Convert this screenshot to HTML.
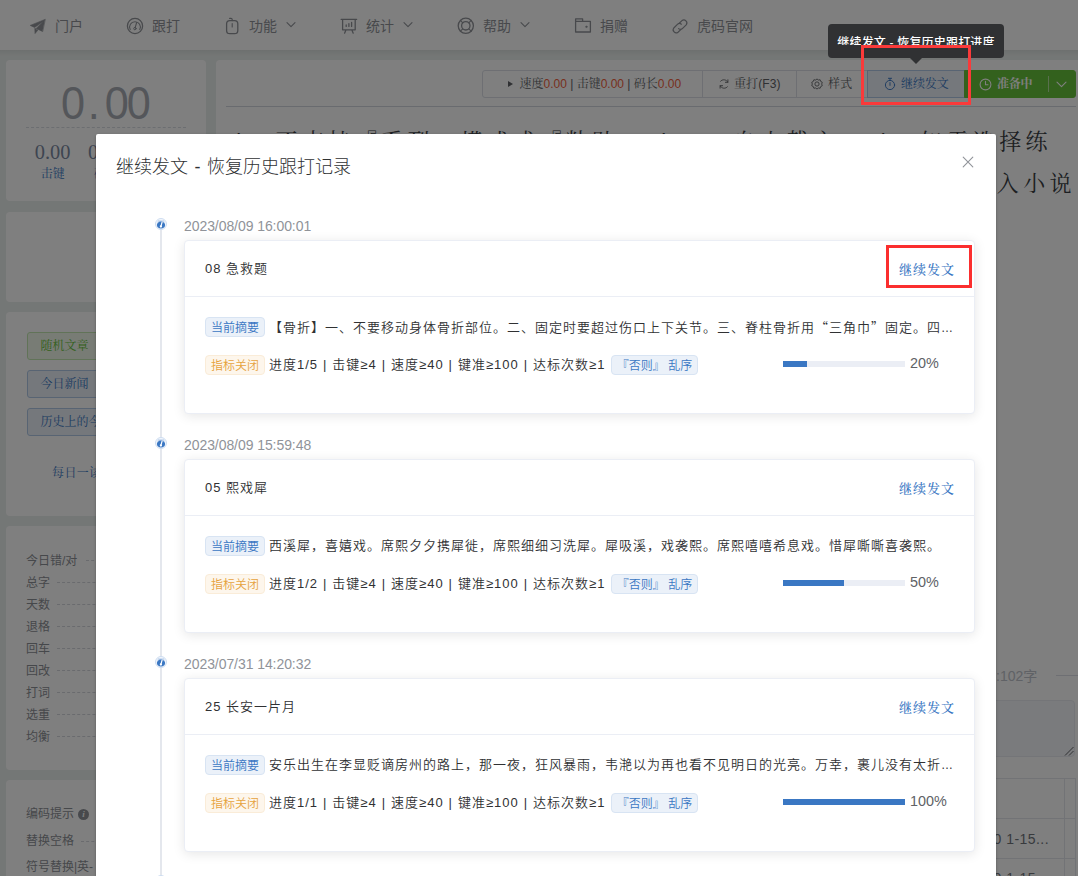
<!DOCTYPE html>
<html lang="zh-CN">
<head>
<meta charset="utf-8">
<title>虎码跟打器 - 继续发文</title>
<style>
*{box-sizing:border-box}
html,body{margin:0;padding:0}
body{width:1078px;height:876px;overflow:hidden;position:relative;background:#e9eeec;font-family:"Liberation Sans","Noto Sans CJK SC",sans-serif;color:#303133;font-size:14px}
.abs{position:absolute}
.kai{font-family:"Liberation Sans","Noto Serif CJK SC",serif}
/* header */
#hd{left:0;top:0;width:1078px;height:50px;background:#fff}
.mi{position:absolute;top:0;height:50px;line-height:52px;font-size:14px;color:#909399;white-space:nowrap}
.mi svg{position:absolute;top:17px;width:18px;height:18px}
.mi .arr{position:absolute;top:21px;width:10px;height:10px}
/* cards */
.card{position:absolute;background:#fff;border-radius:4px}
.lbl{position:absolute;left:20px;font-size:12px;line-height:16px;color:#8d9096;white-space:nowrap}
.dash{position:absolute;height:0;border-top:1px dashed #d4d7dd}
.pbtn{position:absolute;left:21px;width:120px;height:28px;border-radius:3px;font-size:12px;line-height:27.5px;padding-left:12.5px;white-space:nowrap;border:1px solid}
#lcd span{display:inline-block;width:23.05px;text-align:center}
.st{position:absolute;top:80px;width:53.3px;text-align:center}
.st b{display:block;font:normal 20.4px/24px "Liberation Serif",serif;color:#7d8ba3}
.st i{display:block;font-style:normal;font-size:12px;line-height:14px;color:#3a77c3;margin-top:3px;font-family:"Liberation Serif","Noto Serif CJK SC",serif}
/* toolbar */
.tb{position:absolute;top:10px;height:28px;border:1px solid #dcdfe6;background:#fff;font-size:12px;line-height:26px;color:#606266;white-space:nowrap;text-align:center}
.tb em{font-style:normal;font-size:12px;color:#f0603c;font-family:"Liberation Sans",sans-serif}
.art{font-size:22px;line-height:32px;letter-spacing:4.4px;color:#3b3e44;white-space:nowrap}
/* overlay */
#ov{left:0;top:0;width:1078px;height:876px;background:rgba(0,0,0,.5)}
/* dialog */
#dlg{left:96px;top:134px;width:900px;height:800px;background:#fff;border-radius:2px;box-shadow:0 1px 3px rgba(0,0,0,.3)}
.ts{position:absolute;left:88px;font-size:14px;line-height:16px;color:#909399;white-space:nowrap;letter-spacing:-.07px}
.node{position:absolute;left:59px;width:12px;height:12px}
.tc{position:absolute;left:88px;width:791px;height:174px;background:#fff;border:1px solid #ebeef5;border-radius:4px;box-shadow:0 2px 12px 0 rgba(0,0,0,.1)}
.tc .h{position:absolute;left:0;top:0;width:789px;height:56px;border-bottom:1px solid #ebeef5}
.tc .h .t{font-weight:350;position:absolute;left:20px;top:18px;font-size:13px;letter-spacing:1px;line-height:20px;color:#303133;white-space:nowrap}
.tc .h .a{position:absolute;right:19px;top:20px;font-weight:500;font-size:13px;line-height:18px;color:#3a77c3;letter-spacing:1px;white-space:nowrap}
.tag{font-weight:350;position:absolute;height:20px;line-height:20.5px;font-size:12px;padding:0 4px;border:1px solid;border-radius:4px;white-space:nowrap;text-align:center}
.tag.b{background:#ebf1f9;border-color:#d8e4f3;color:#3a77c3}
.tag.o{background:#fdf6ec;border-color:#faecd8;color:#e6a23c}
.ln{position:absolute;font-weight:350;font-size:13px;letter-spacing:1px;line-height:20px;color:#303133;white-space:nowrap;overflow:hidden}
.ln .cq{font-family:"Noto Sans CJK SC",sans-serif}.ln .el{font-size:12px;letter-spacing:0}
.l2{letter-spacing:1px;word-spacing:.35px}
.pg{position:absolute;left:598px;width:122px;height:6px;background:#ebeef5}
.pg i{display:block;height:6px;background:#3a77c3}
.pt{position:absolute;left:725px;font-size:14.4px;line-height:18px;color:#606266}
</style>
</head>
<body>
<!-- ============ header ============ -->
<div id="hd" class="abs">
  <svg class="abs" style="left:0;top:0" width="1078" height="50" viewBox="0 0 1078 50" fill="none" stroke="#909399" stroke-width="1.3" stroke-linecap="round" stroke-linejoin="round">
    <!-- position (paper plane) -->
    <path d="M45 19.4 L30.2 25.4 L34.6 27.5 L43.4 21.2 L36.2 28.4 L42.4 31.4 Z M34.8 28.6 L35 33.6 L37.8 30.2 Z" fill="#909399" stroke-width=".6"/>
    <!-- odometer -->
    <circle cx="135" cy="26" r="7.6"/>
    <path d="M130.2 29.6 A5.4 5.4 0 1 1 139.8 29.6" stroke-width="1.1"/>
    <path d="M136.6 22.6 L135.2 27.6" stroke-width="1.1"/>
    <circle cx="134.9" cy="28.6" r="1.2" stroke-width="1"/>
    <!-- mouse -->
    <rect x="226.6" y="20.6" width="11.2" height="13" rx="3.2"/>
    <path d="M232.2 23.6 V27 M232.2 20.6 V19.6 Q232.2 18.4 231 18.4 H229.6" stroke-width="1.1"/>
    <path d="M287 22.6 L291 26.6 L295 22.6" stroke-width="1.1"/>
    <!-- data board -->
    <path d="M341.2 19.4 H356.6 M342.6 19.4 V29.8 H355.2 V19.4 M346 29.8 L344.6 33.2 M351.8 29.8 L353.2 33.2 M346.2 26.4 V25 M348.9 26.4 V23.6 M351.6 26.4 V22.4"/>
    <path d="M404 22.6 L408 26.6 L412 22.6" stroke-width="1.1"/>
    <!-- help -->
    <circle cx="465.8" cy="25.8" r="7.6"/>
    <circle cx="465.8" cy="25.8" r="4.2"/>
    <path d="M460.4 20.4 L462.8 22.8 M471.2 20.4 L468.8 22.8 M460.4 31.2 L462.8 28.8 M471.2 31.2 L468.8 28.8" stroke-width="1.1"/>
    <path d="M521 22.6 L525 26.6 L529 22.6" stroke-width="1.1"/>
    <!-- wallet/folder -->
    <path d="M575.6 21.4 V18.8 H582.6 V21.4 M575.6 21.4 H590.4 V32 H575.6 Z"/>
    <circle cx="586.4" cy="26.8" r=".8" fill="#909399" stroke-width=".6"/>
    <!-- link -->
    <path d="M679.2 23.2 L682 20.6 A3 3 0 0 1 686.2 24.8 L682.6 28.4 A3 3 0 0 1 678.6 28.6 M680.8 29.6 L678 32.2 A3 3 0 0 1 673.8 28 L677.4 24.4 A3 3 0 0 1 681.4 24.2" stroke-width="1.2"/>
  </svg>
  <div class="mi" style="left:6px;width:97px"><span style="position:absolute;left:49px">门户</span></div>
  <div class="mi" style="left:103px;width:97px"><span style="position:absolute;left:49px">跟打</span></div>
  <div class="mi" style="left:200px;width:117px"><span style="position:absolute;left:49px">功能</span></div>
  <div class="mi" style="left:317px;width:117px"><span style="position:absolute;left:49px">统计</span></div>
  <div class="mi" style="left:434px;width:117px"><span style="position:absolute;left:49px">帮助</span></div>
  <div class="mi" style="left:551px;width:97px"><span style="position:absolute;left:49px">捐赠</span></div>
  <div class="mi" style="left:648px;width:125px"><span style="position:absolute;left:49px">虎码官网</span></div>
</div>
<div class="abs" style="left:0;top:50px;width:1078px;height:6px;background:linear-gradient(rgba(0,0,0,.06),rgba(0,0,0,0))"></div>

<!-- ============ left column ============ -->
<div class="card" id="c1" style="left:6px;top:60px;width:200px;height:141px">
  <div class="abs" id="lcd" style="left:54.5px;top:17px;width:110px;height:54px;font-size:45.5px;line-height:54px;transform:scaleX(.95);transform-origin:0 0;color:#a9adb5;white-space:nowrap"><span>0</span><span>.</span><span>0</span><span>0</span></div>
  <div class="dash" style="left:20px;top:67px;width:160px;border-top-color:#d9dce3"></div>
  <div class="st" style="left:20px"><b>0.00</b><i>击键</i></div>
  <div class="st" style="left:73.3px"><b>0.00</b><i>码长</i></div>
  <div class="st" style="left:126.6px"><b>0.00</b><i>速度</i></div>
</div>
<div class="card" id="c2" style="left:6px;top:212px;width:200px;height:90px"></div>
<div class="card" id="c3" style="left:6px;top:312px;width:200px;height:204px">
  <div class="pbtn kai" style="top:20px;background:#f0f9eb;border-color:#c2e7b0;color:#67c23a">随机文章</div>
  <div class="pbtn kai" style="top:58px;background:#ebf1f9;border-color:#b0c9e7;color:#3a77c3">今日新闻</div>
  <div class="pbtn kai" style="top:96px;background:#ebf1f9;border-color:#b0c9e7;color:#3a77c3">历史上的今天</div>
  <div class="abs kai" style="left:46px;top:153px;font-size:12px;line-height:16px;color:#3a77c3;white-space:nowrap;letter-spacing:.4px">每日一读</div>
</div>
<div class="card" id="c4" style="left:6px;top:526px;width:200px;height:244px">
  <div class="lbl" style="top:27px">今日错/对</div><div class="dash" style="left:80px;top:34px;width:70px"></div>
  <div class="lbl" style="top:49px">总字</div><div class="dash" style="left:51px;top:56px;width:99px"></div>
  <div class="lbl" style="top:71px">天数</div><div class="dash" style="left:51px;top:78px;width:99px"></div>
  <div class="lbl" style="top:93px">退格</div><div class="dash" style="left:51px;top:100px;width:99px"></div>
  <div class="lbl" style="top:115px">回车</div><div class="dash" style="left:51px;top:122px;width:99px"></div>
  <div class="lbl" style="top:137px">回改</div><div class="dash" style="left:51px;top:144px;width:99px"></div>
  <div class="lbl" style="top:159px">打词</div><div class="dash" style="left:51px;top:166px;width:99px"></div>
  <div class="lbl" style="top:181px">选重</div><div class="dash" style="left:51px;top:188px;width:99px"></div>
  <div class="lbl" style="top:203px">均衡</div><div class="dash" style="left:51px;top:210px;width:99px"></div>
</div>
<div class="card" id="c5" style="left:6px;top:780px;width:200px;height:200px">
  <div class="lbl" style="top:26px">编码提示</div>
  <div class="abs" style="left:72px;top:28.5px;width:11px;height:11px;border-radius:50%;background:#909399;color:#fff;font:italic bold 9px/11px 'Liberation Serif',serif;text-align:center">i</div>
  <div class="lbl" style="top:52.5px">替换空格</div><div class="dash" style="left:75px;top:61px;width:70px"></div>
  <div class="lbl" style="top:78.5px">符号替换|英-<span style="margin-left:4px">中</span></div>
</div>

<!-- ============ main card ============ -->
<div class="card" id="main" style="left:216px;top:60px;width:880px;height:900px">
  <!-- toolbar : coordinates relative to card (page x-216, page y-60) -->
  <div class="tb kai" style="left:266px;width:220.5px;border-radius:3px 0 0 3px;text-align:left;padding-left:36.5px;letter-spacing:0"><span class="abs" style="left:25px;top:9.5px;width:0;height:0;border-left:5px solid #606266;border-top:3.5px solid transparent;border-bottom:3.5px solid transparent"></span>速度<em>0.00</em> | 击键<em>0.00</em> | 码长<em>0.00</em></div>
  <div class="tb kai" style="left:485.5px;width:95px;text-align:left;padding-left:31.5px;letter-spacing:.1px"><svg class="abs" style="left:15px;top:7px" width="12" height="12" viewBox="0 0 12 12" fill="none" stroke="#606266" stroke-width=".9" stroke-linecap="round" stroke-linejoin="round"><path d="M9.8 4.2 A4.2 4.2 0 0 0 2.6 3.2 M2.2 7.8 A4.2 4.2 0 0 0 9.4 8.8 M9.9 1.8 V4.3 H7.4 M2.1 10.2 V7.7 H4.6"/></svg>重打(F3)</div>
  <div class="tb kai" style="left:579.5px;width:73.5px;text-align:left;padding-left:31.5px;letter-spacing:.3px"><svg class="abs" style="left:14px;top:7px" width="12" height="12" viewBox="0 0 13 13" fill="none" stroke="#606266" stroke-width=".95" stroke-linejoin="round"><path d="M6.5 1 L8 2.2 L9.9 1.9 L10.5 3.7 L12.2 4.6 L11.6 6.5 L12.2 8.4 L10.5 9.3 L9.9 11.1 L8 10.8 L6.5 12 L5 10.8 L3.1 11.1 L2.5 9.3 L.8 8.4 L1.4 6.5 L.8 4.6 L2.5 3.7 L3.1 1.9 L5 2.2 Z"/><circle cx="6.5" cy="6.5" r="2.3"/></svg>样式</div>
  <div class="tb kai" style="left:651px;width:98px;text-align:left;padding-left:33px;background:#ebf1f9;border-color:#b0c9e7;color:#3a77c3;letter-spacing:-.1px"><svg class="abs" style="left:16px;top:6px" width="12" height="14" viewBox="0 0 12 14" fill="none" stroke="#3a77c3" stroke-width=".95" stroke-linecap="round"><circle cx="6" cy="8" r="4.6"/><path d="M6 5.6 V8.4 M4.4 1.3 H7.6 M6 1.5 V3.2"/></svg>继续发文</div>
  <div class="tb kai" style="left:748px;width:112px;border-radius:0 3px 3px 0;background:#67c23a;border-color:#67c23a;color:#fff;text-align:left;padding-left:32px;font-weight:bold;letter-spacing:-.2px"><svg class="abs" style="left:14px;top:6.5px" width="13" height="13" viewBox="0 0 13 13" fill="none" stroke="#fff" stroke-width="1.1" stroke-linecap="round"><circle cx="6.5" cy="6.5" r="5.4"/><path d="M6.5 3.4 V6.8 H9"/></svg>准备中<span class="abs" style="left:82.5px;top:5px;width:1px;height:16px;background:rgba(255,255,255,.5)"></span><svg class="abs" style="left:91px;top:9.5px" width="11" height="7" viewBox="0 0 11 7" fill="none" stroke="#fff" stroke-width="1.1" stroke-linecap="round" stroke-linejoin="round"><path d="M1 1.2 L5.5 5.6 L10 1.2"/></svg></div>
  <div class="abs" style="left:10px;top:46px;width:850px;height:1px;background:#d3d6de"></div>
  <!-- article -->
  <div class="abs kai art" style="left:12px;right:44px;top:66px;display:flex;justify-content:flex-end;overflow:hidden"><span>1)、不支持『系列』模式或『粘贴Ctrl+V』自由载文。2)、如需选择练</span></div>
  <div class="abs kai art" style="right:20px;top:108px">习，请先在『功能』菜单内发文，支持单字、词语、文章、自由载入小说</div>
  <!-- lower area -->
  <div class="abs" style="left:766px;top:606px;font-size:14px;line-height:20px;color:#c0c4cc;white-space:nowrap">共:102字</div>
  <div class="abs" style="left:840px;top:615px;width:40px;height:1px;background:#dcdfe6"></div>
  <div class="abs" style="left:10px;top:640px;width:849px;height:57px;background:#f5f7fa;border:1px solid #e8ebf0;border-radius:4px"><svg class="abs" style="right:0;bottom:0" width="10" height="10" viewBox="0 0 10 10" stroke="#606266" stroke-width="1"><path d="M9.5 1 L1 9.5 M9.5 5 L5 9.5"/></svg></div>
  <div class="abs" id="tbl" style="left:10px;top:718px;width:850px;height:200px;border:1px solid #e4e7ed;border-bottom:0">
    <div class="abs" style="left:0;top:39px;width:848px;height:1px;background:#e4e7ed"></div>
    <div class="abs" style="left:0;top:79px;width:848px;height:1px;background:#e4e7ed"></div>
    <div class="abs" style="left:0;top:118px;width:848px;height:1px;background:#e4e7ed"></div>
    <div class="abs" style="left:837px;top:0;width:1px;height:200px;background:#e4e7ed"></div>
    <div class="abs" style="left:690px;top:50px;width:132px;font-size:14px;line-height:20px;color:#70747b;white-space:nowrap;overflow:hidden;text-align:right;letter-spacing:.45px">2023-08-10 1-15...</div>
    <div class="abs" style="left:690px;top:89px;width:132px;font-size:14px;line-height:20px;color:#70747b;white-space:nowrap;overflow:hidden;text-align:right;letter-spacing:.45px">2023-08-10 1-15...</div>
  </div>
</div>

<!-- ============ overlay ============ -->
<div id="ov" class="abs"></div>

<!-- ============ dialog ============ -->
<div id="dlg" class="abs">
  <div class="abs" style="left:20px;top:21px;font-size:18px;font-weight:300;line-height:24px;color:#303133;white-space:nowrap;word-spacing:1.5px">继续发文 - 恢复历史跟打记录</div>
  <svg class="abs" style="left:866px;top:22px" width="12" height="12" viewBox="0 0 12 12" stroke="#909399" stroke-width="1.1" stroke-linecap="round"><path d="M1.2 1.2 L10.8 10.8 M10.8 1.2 L1.2 10.8"/></svg>
  <div class="abs" style="left:64px;top:90px;width:2px;height:700px;background:#e4e7ed"></div>
  <svg class="node" style="top:84px" viewBox="0 0 12 12"><circle cx="6" cy="6" r="5.5" fill="#f3f7fc" stroke="#cddcf0" stroke-width="1"/><path d="M2.2 4.2 Q6 1.2 9.8 4.2 M3 2.6 Q6 4.2 9 2.6" stroke="#b7cdea" stroke-width=".8" fill="none"/><path d="M6 3.4 C8.6 3.4 10.1 5.2 10.1 7.1 C10.1 9.2 8.4 10.6 6 10.6 C3.6 10.6 1.9 9.2 1.9 7.1 C1.9 5.2 3.4 3.4 6 3.4 Z" fill="#3a77c3"/><path d="M7.1 4.2 L6 8.2" stroke="#fff" stroke-width="1.2" stroke-linecap="round"/><circle cx="5.9" cy="8.5" r="1.15" fill="#fff"/></svg>
  <div class="ts" style="top:83.5px">2023/08/09 16:00:01</div>
  <div class="tc" style="top:106px">
    <div class="h"><span class="t">08 急救题</span><span class="a kai">继续发文</span></div>
    <span class="tag b" style="left:20px;top:76px;width:60px">当前摘要</span>
    <div class="ln" style="left:84px;top:76px;width:690px">【骨折】一、不要移动身体骨折部位。二、固定时要超过伤口上下关节。三、脊柱骨折用<span class="cq">“</span>三角巾<span class="cq">”</span>固定。四<span class="el">…</span></div>
    <span class="tag o" style="left:20px;top:114px;width:60px">指标关闭</span>
    <div class="ln l2" style="left:84px;top:114px">进度1/5 | 击键≥4 | 速度≥40 | 键准≥100 | 达标次数≥1</div>
    <span class="tag b" style="left:426px;top:114px;width:87px">『否则』 乱序</span>
    <div class="pg" style="top:120px"><i style="width:20%"></i></div>
    <div class="pt" style="top:113px">20%</div>
  </div>
  <svg class="node" style="top:303px" viewBox="0 0 12 12"><circle cx="6" cy="6" r="5.5" fill="#f3f7fc" stroke="#cddcf0" stroke-width="1"/><path d="M2.2 4.2 Q6 1.2 9.8 4.2 M3 2.6 Q6 4.2 9 2.6" stroke="#b7cdea" stroke-width=".8" fill="none"/><path d="M6 3.4 C8.6 3.4 10.1 5.2 10.1 7.1 C10.1 9.2 8.4 10.6 6 10.6 C3.6 10.6 1.9 9.2 1.9 7.1 C1.9 5.2 3.4 3.4 6 3.4 Z" fill="#3a77c3"/><path d="M7.1 4.2 L6 8.2" stroke="#fff" stroke-width="1.2" stroke-linecap="round"/><circle cx="5.9" cy="8.5" r="1.15" fill="#fff"/></svg>
  <div class="ts" style="top:302.5px">2023/08/09 15:59:48</div>
  <div class="tc" style="top:325px">
    <div class="h"><span class="t">05 熙戏犀</span><span class="a kai">继续发文</span></div>
    <span class="tag b" style="left:20px;top:76px;width:60px">当前摘要</span>
    <div class="ln" style="left:84px;top:76px;width:690px">西溪犀，喜嬉戏。席熙夕夕携犀徙，席熙细细习洗犀。犀吸溪，戏袭熙。席熙嘻嘻希息戏。惜犀嘶嘶喜袭熙。</div>
    <span class="tag o" style="left:20px;top:114px;width:60px">指标关闭</span>
    <div class="ln l2" style="left:84px;top:114px">进度1/2 | 击键≥4 | 速度≥40 | 键准≥100 | 达标次数≥1</div>
    <span class="tag b" style="left:426px;top:114px;width:87px">『否则』 乱序</span>
    <div class="pg" style="top:120px"><i style="width:50%"></i></div>
    <div class="pt" style="top:113px">50%</div>
  </div>
  <svg class="node" style="top:522px" viewBox="0 0 12 12"><circle cx="6" cy="6" r="5.5" fill="#f3f7fc" stroke="#cddcf0" stroke-width="1"/><path d="M2.2 4.2 Q6 1.2 9.8 4.2 M3 2.6 Q6 4.2 9 2.6" stroke="#b7cdea" stroke-width=".8" fill="none"/><path d="M6 3.4 C8.6 3.4 10.1 5.2 10.1 7.1 C10.1 9.2 8.4 10.6 6 10.6 C3.6 10.6 1.9 9.2 1.9 7.1 C1.9 5.2 3.4 3.4 6 3.4 Z" fill="#3a77c3"/><path d="M7.1 4.2 L6 8.2" stroke="#fff" stroke-width="1.2" stroke-linecap="round"/><circle cx="5.9" cy="8.5" r="1.15" fill="#fff"/></svg>
  <div class="ts" style="top:521.5px">2023/07/31 14:20:32</div>
  <div class="tc" style="top:544px">
    <div class="h"><span class="t">25 长安一片月</span><span class="a kai">继续发文</span></div>
    <span class="tag b" style="left:20px;top:76px;width:60px">当前摘要</span>
    <div class="ln" style="left:84px;top:76px;width:690px">安乐出生在李显贬谪房州的路上，那一夜，狂风暴雨，韦滟以为再也看不见明日的光亮。万幸，裹儿没有太折<span class="el">…</span></div>
    <span class="tag o" style="left:20px;top:114px;width:60px">指标关闭</span>
    <div class="ln l2" style="left:84px;top:114px">进度1/1 | 击键≥4 | 速度≥40 | 键准≥100 | 达标次数≥1</div>
    <span class="tag b" style="left:426px;top:114px;width:87px">『否则』 乱序</span>
    <div class="pg" style="top:120px"><i style="width:100%"></i></div>
    <div class="pt" style="top:113px">100%</div>
  </div>
  <svg class="node" style="top:741px" viewBox="0 0 12 12"><circle cx="6" cy="6" r="5.5" fill="#f3f7fc" stroke="#cddcf0" stroke-width="1"/><path d="M2.2 4.2 Q6 1.2 9.8 4.2 M3 2.6 Q6 4.2 9 2.6" stroke="#b7cdea" stroke-width=".8" fill="none"/><path d="M6 3.4 C8.6 3.4 10.1 5.2 10.1 7.1 C10.1 9.2 8.4 10.6 6 10.6 C3.6 10.6 1.9 9.2 1.9 7.1 C1.9 5.2 3.4 3.4 6 3.4 Z" fill="#3a77c3"/><path d="M7.1 4.2 L6 8.2" stroke="#fff" stroke-width="1.2" stroke-linecap="round"/><circle cx="5.9" cy="8.5" r="1.15" fill="#fff"/></svg>
  <div class="ts" style="top:740.5px">2023/07/30 21:08:15</div>
</div>

<!-- ============ tooltip ============ -->
<div id="tip" class="abs" style="left:828px;top:24px;width:176px;height:34px;background:#303133;border-radius:4px"></div>
<div class="abs" style="left:910px;top:58px;width:0;height:0;border-left:6px solid transparent;border-right:6px solid transparent;border-top:6px solid #303133"></div>
<div class="abs" style="left:828px;top:24px;width:176px;height:21px;overflow:hidden;color:#fff;font-size:12px;font-weight:500;line-height:14px;white-space:nowrap;text-align:center"><span style="position:relative;top:12px;letter-spacing:.18px">继续发文 - 恢复历史跟打进度</span></div>
<!-- ============ red marks ============ -->
<div class="abs" style="left:861px;top:45px;width:110px;height:60px;border:3px solid #fa3a3a"></div>
<div class="abs" style="left:886px;top:245px;width:86px;height:43px;border:3px solid #fb2e2e"></div>

</body>
</html>
